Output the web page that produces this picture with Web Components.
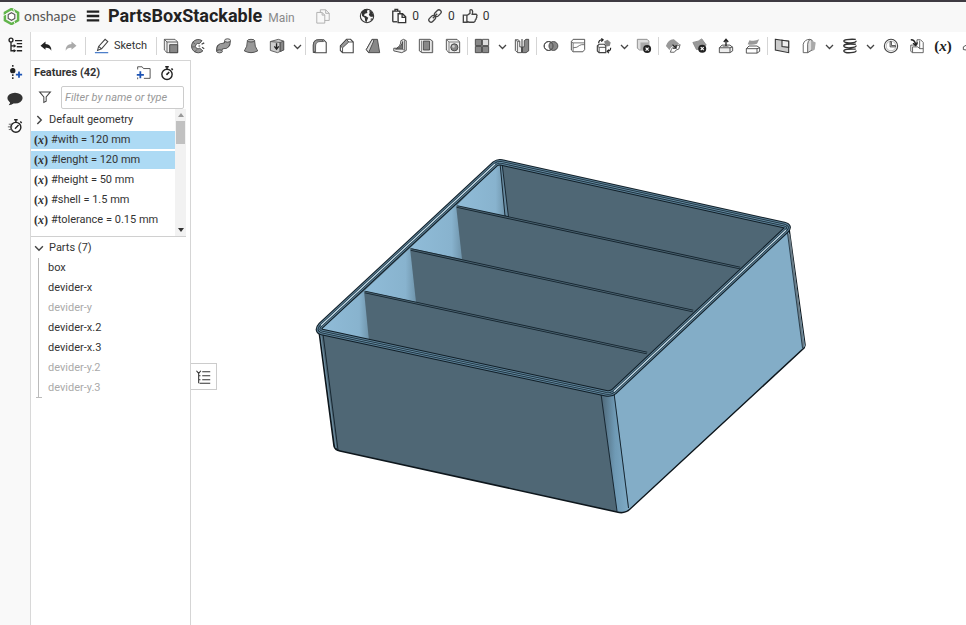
<!DOCTYPE html>
<html lang="en">
<head>
<meta charset="utf-8">
<title>PartsBoxStackable</title>
<style>
html,body{height:100%;margin:0}
body{font:11px/18px Roboto,"Liberation Sans",sans-serif;color:#333;background:#fff;overflow:hidden}
</style>
</head>
<body>
<cad-app></cad-app>
<script>
const ICONS = {
logo:`<path d="M9 1l7 4v8l-7 4-7-4V5z" fill="none" stroke="#62b54c" stroke-width="2.600"/><path d="M9 5l3.500 2v4L9 13l-3.500-2V7z" fill="#fff" stroke="#555" stroke-width="1.200"/><path d="M0 8l5-2M11 1l1.500 4M11 13l2 4" stroke="#f8f8f8" stroke-width="1"/>`,
menu:`<path d="M2 4h14M2 9h14M2 14h14" stroke="#222" stroke-width="2.600"/>`,
copy:`<path d="M6 5V2h6l4 4v8h-5M12 2v4h4M2 5h6l3 3v9H2zM8 5v3h3" fill="none" stroke="#aaa"/>`,
globe:`<circle cx="9" cy="9" r="7.500" fill="#f8f8f8" stroke="#333" stroke-width="1.200"/><path d="M3 4l4-2.500h3L9 4l.5 1.500-3 1-1 2 2 .5 3 2-1 2-1 3-1.500-1-.5-4-3-2-.5-3zM11.500 2.500l3 2 2 4-1.500 1.500-2.500-.5-1.500-2 1-2zM13 12l2-.5-1.500 3z" fill="#333"/>`,
docs:`<path d="M2 15.500V3.500h8v2M4.500 3V1.500h3V3" fill="none" stroke="#333" stroke-width="1.500"/><path d="M2 15.500h5" stroke="#333" stroke-width="1.500"/><path d="M8 6.500h5l3.500 3.500v6.500H8zM12.500 6.500v4h4" fill="#fff" stroke="#333" stroke-width="1.500"/>`,
link:`<g fill="none" stroke="#444" stroke-width="1.500"><rect x="8" y="3.500" width="8.500" height="5" rx="2.500" transform="rotate(-45 12 6)"/><rect x="1.500" y="9.500" width="8.500" height="5" rx="2.500" transform="rotate(-45 6 12)"/><path d="M6.500 11.500l5-5"/></g>`,
thumb:`<path d="M1.500 8h4v8h-4zM5.500 8.500L9 6V2.500Q10 1 11.500 2.500 12.500 4 11.500 7H16q1.500 1 .5 2.500.5 1-.5 2 0 1.500-1 2 0 2-1.500 2.500H8l-2.500-1" fill="none" stroke="#444" stroke-width="1.500"/>`,
tree:`<g fill="none" stroke="#222" stroke-width="1.500"><circle cx="4.500" cy="3.500" r="2.200"/><path d="M4.500 6v9.500H9M4.500 10H9M9 4h8M11 7.500h6M11 11h6M11 15.500h6"/></g><path d="M7.500 8l3 2-3 2zM7.500 13.500l3 2-3 2z" fill="#222"/>`,
insert:`<path d="M6.500 1v16" stroke="#333" stroke-width="1.800" stroke-dasharray="2 1.500"/><circle cx="6.500" cy="7.500" r="3" fill="#222"/><path d="M13.500 8.500v7M10 12h7" stroke="#1d54b5" stroke-width="2"/>`,
chat:`<ellipse cx="9" cy="8" rx="8.600" ry="6" fill="#333"/><path d="M3 11q1 3-1 5 4 0 6-3z" fill="#333"/>`,
watch:`<circle cx="9" cy="10.500" r="5.800" fill="none" stroke="#222" stroke-width="1.600"/><path d="M7 2h4M9 2v3M14 4l1.500 1.500M9 10.500l2.500-2.500" stroke="#222" stroke-width="1.700"/><circle cx="9" cy="10.500" r="1" fill="#222"/>`,
perf:`<circle cx="10" cy="10.500" r="5.600" fill="#fff" stroke="#222" stroke-width="1.600"/><path d="M8 2h4M10 2v3M15 4l1.500 1.500M9 12l4-4" stroke="#222" stroke-width="1.600"/><path d="M2 7h4M1 10h5M2 13h4" stroke="#555" stroke-width="1"/>`,
undo:`<path d="M3 8l6-5v3q7 0 7 8-2-4-7-3.500V13z" fill="#222"/>`,
redo:`<path d="M15 8L9 3v3q-7 0-7 8 2-4 7-3.500V13z" fill="#aaa"/>`,
pencil:`<path d="M4 14l1.200-4.500L12.500 1.500l3 2.500-7 8.200zM5.200 9.500l3.300 2.700" fill="#fff" stroke="#444" stroke-width="1.200"/><path d="M1 16.500h15" stroke="#3c73c5" stroke-width="1.300"/>`,
extrude:`<path d="M1.500 1.500h12l3 3v12h-12l-3-3z" fill="#eee" stroke="#555"/><path d="M1.500 1.500l3 3h12M4.500 4.500v12" fill="none" stroke="#555"/><path d="M7.500 7.500h9v9h-9z" fill="#888" stroke="#444"/>`,
revolve:`<path d="M13.500 3A7.500 7.500 0 1 0 14.500 14.500L11 11.500A3 3 0 1 1 10.500 6.500z" fill="#999" stroke="#444"/><path d="M6 7L3 4.500M5.500 10H1.500M7.500 13l-2 3" stroke="#555" stroke-width=".8"/><path d="M9.500 9h2M13 7l3-1.500M13.500 10.500l2.500 1.500" stroke="#444" stroke-width="1.400"/>`,
sweep:`<path d="M4 14.500q-1-5.500 4-5.500 5 0 5-5.500" fill="none" stroke="#444" stroke-width="7.400"/><path d="M4 15q-1-6 4-6 5 0 5-6" fill="none" stroke="#999" stroke-width="5.400"/><ellipse cx="13" cy="2.800" rx="3.300" ry="1.900" fill="#ddd" stroke="#444"/><ellipse cx="4" cy="15" rx="3.200" ry="1.700" fill="#aaa" stroke="#444"/>`,
loft:`<path d="M5 3h8q0 7 3.500 11.500-7.500 4-15 0Q5 10 5 3z" fill="#999" stroke="#444"/><ellipse cx="9" cy="3" rx="4" ry="1.500" fill="#bbb" stroke="#444"/>`,
thicken:`<path d="M1.500 4l9-2.500 6 2v10l-7 3-8-2.500z" fill="#ccc" stroke="#555"/><path d="M12.500 5l4-1.500v10l-4 1.700z" fill="#888" stroke="#555"/><path d="M1.500 4L12.500 5v10" fill="none" stroke="#555"/><path d="M8.500 6v6M6 9.500L8.500 12.500 11 9.500" fill="none" stroke="#222" stroke-width="1.500"/>`,
fillet:`<path d="M1.500 16V8Q1.500 2 8 2h5l3 3v11.500H4z" fill="#fff" stroke="#444" stroke-width="1.200"/><path d="M1.500 14V8Q1.500 2 8 2h3l2 2H9Q4 4 4 9v7.500z" fill="#999" stroke="#555"/>`,
chamfer:`<path d="M1.500 14V9l7-7.500H13l3 3v12H4z" fill="#fff" stroke="#444" stroke-width="1.200"/><path d="M1.500 9l7-7.500 2.500 3L4 11z" fill="#999" stroke="#444"/><path d="M4 11v5.500M11 4.500h5" stroke="#444"/>`,
draft:`<path d="M1.500 13L8 1.500h6l2.500 15H4z" fill="#888" stroke="#444"/><path d="M1.500 13l6.500-11.500L10 3 4 16.500z" fill="#ddd" stroke="#444"/>`,
rib:`<path d="M10 3l3-1.500 3 1.500v11l-5 2.500-9-2v-3h3Q10 9 10 3z" fill="#eee" stroke="#444"/><path d="M12 4v8.500H4Q11 10 12 4z" fill="#777" stroke="#444"/><path d="M11 12l3 2V2.500" fill="none" stroke="#666"/>`,
shell:`<path d="M1.500 1.500h12l3 2v13h-12l-3-2z" fill="#eee" stroke="#444"/><path d="M6 3.500h7v10H6z" fill="#888" stroke="#444"/><path d="M4 3v13.500M16 3.500v13" stroke="#777"/>`,
hole:`<path d="M1.500 1.500h12l3 3v12h-12l-3-3z" fill="#eee" stroke="#444"/><path d="M1.500 1.500l3 3h12M4.500 4.500v12" fill="none" stroke="#777"/><circle cx="10.500" cy="10.500" r="4" fill="#888" stroke="#444"/><circle cx="9.500" cy="9.500" r="1.500" fill="#ccc"/>`,
pattern:`<g stroke="#444"><path d="M1.500 1.500h7v7h-7zM9.500 9.500h7v7h-7zM1.500 9.500h7v7h-7z" fill="#888"/><path d="M9.500 1.500h7v7h-7z" fill="#ddd"/></g>`,
mirror:`<path d="M1.500 2h3l2 1.500V10h2v6.500H4L1.500 14z" fill="#eee" stroke="#444"/><path d="M9.500 16.500V10h2V3l2-1.500h3v13l-3 2z" fill="#888" stroke="#444"/><path d="M9 1v16" stroke="#444" stroke-width="1.200"/><path d="M4 4v12.500M1.500 2L4 4h2.500" stroke="#666" fill="none"/>`,
boolean:`<circle cx="6.300" cy="9" r="5" fill="#fff" stroke="#444"/><circle cx="11.700" cy="9" r="5" fill="#888" stroke="#444"/><circle cx="6.300" cy="9" r="5" fill="none" stroke="#444"/>`,
split:`<path d="M1.500 4l2-2.500h13V13l-2 2.500h-11l-2-2z" fill="#fff" stroke="#444"/><path d="M1.500 4l2 1.500h13M3.500 5.500v10M3.500 11q5 0 7-2.500 2-1.500 6-1" fill="none" stroke="#666"/>`,
transform:`<path d="M1.500 9l2-2h6l1.500 2v7.500H3.500l-2-2z" fill="#fff" stroke="#444" stroke-width="1.300"/><path d="M1.500 9l2 1.500H11M3.500 10.500v6" fill="none" stroke="#444"/><path d="M9 4l4-2 3.500 3-1 4-4 .5z" fill="#888"/><path d="M3 6q0-4 4-4M6 .5L8 2 6 4M16.500 11q0 4-3.500 4M14.500 13l-2 2 2 2" fill="none" stroke="#222" stroke-width="1.300"/>`,
delete:`<path d="M1.500 1.500h11l2 2v10H4l-2.500-2z" fill="#ddd" stroke="#888"/><path d="M5 5h9v8H5z" fill="#aaa"/><circle cx="12.500" cy="12.500" r="4.500" fill="#222"/><path d="M10.800 10.800l3.400 3.400m0-3.400l-3.400 3.400" stroke="#fff" stroke-width="1.300"/>`,
modify:`<path d="M1 9Q4 1 10 1.500l6 5-4 3q-4-2-7 4z" fill="#999"/><path d="M6 16Q8 9 12 9.500l5-2-1.500 5-3 1-2 2.500z" fill="#fff" stroke="#555"/><path d="M8.500 7.500l4 4M12.500 8v3.500H9" fill="none" stroke="#222" stroke-width="1.300"/>`,
delface:`<path d="M1 5Q8 4 11 1l5 7q-4 5-11 5z" fill="#999" stroke="#888"/><circle cx="11.500" cy="12" r="4.500" fill="#222"/><path d="M9.800 10.300l3.400 3.400m0-3.400l-3.400 3.400" stroke="#fff" stroke-width="1.300"/>`,
moveface:`<path d="M1.500 11l3-3h9l3 2.500v4l-3 2h-12z" fill="#eee" stroke="#444"/><path d="M1.500 11h12l3-1M13.500 11v5" fill="none" stroke="#444"/><path d="M5 10l2-2.500h6L11.500 10z" fill="#999"/><path d="M9 9V2M6.500 4.500L9 1.500l2.500 3" fill="none" stroke="#222" stroke-width="1.500"/>`,
replace:`<path d="M1.500 12l3-3h9l3 2v4l-3 2h-12z" fill="#fff" stroke="#444"/><path d="M1.500 12h12l3-1M13.500 12v5" fill="none" stroke="#444"/><path d="M3 7L5 2.500Q11 4 16 1.500L13.500 6.500Q8 8.500 3 7z" fill="#999"/>`,
plane:`<path d="M1.500 1.500l15 2v13l-15-3z" fill="#ccc" stroke="#333" stroke-width="1.200"/><path d="M9 2.500l7.500 1v7L9 9.500z" fill="#eee" stroke="#333" stroke-width="1.200"/>`,
surface:`<path d="M2.500 7Q4 1.500 10 1.500v11l-2.500 4h-5z" fill="#fff" stroke="#555"/><path d="M10 1.500l2.500 1v11l-5 3V7q0-3 2.500-5.500z" fill="#ddd" stroke="#555"/><path d="M12.500 3l4 2-1 8-3 2z" fill="#aaa"/>`,
helix:`<g fill="none" stroke="#333" stroke-width="1.500"><path d="M15.500 1.500Q2 1 2 3.500 3 6 10 5.500q6-.5 6-2.500M15.500 7Q2 6 2 9q1 2.500 8 2 6-.5 6-2.500M15.500 12.500Q2 12 2 14.500q1 2.500 8 2 6-.5 6-2.500"/></g>`,
clock:`<circle cx="9" cy="9" r="7.500" fill="#fff" stroke="#444" stroke-width="1.200"/><circle cx="9" cy="9" r="5.500" fill="none" stroke="#999" stroke-width=".8"/><path d="M8 4v6h6V8.500H9.500V4z" fill="#eee" stroke="#444"/>`,
derive:`<path d="M2 8v7l2 1.500h12V5L13 2H9v6H4z" fill="#fff" stroke="#555"/><path d="M4 10v6.500M4 10h6l2 2h4M12 3v9" fill="none" stroke="#555"/><path d="M2 2q5 0 5.500 6M4.500 6l3 2.500L9.500 5" fill="none" stroke="#222" stroke-width="1.500"/>`,
more:`<path d="M1.500 10q4-4 9-2v4q-4 3-9 1z" fill="none" stroke="#444"/>`,
folder:`<path d="M3 5V2h5l1.500 2H17v11H10M3 14v2" fill="none" stroke="#444"/><path d="M6 7v8M2 11h8" stroke="#1d54b5" stroke-width="2"/>`,
funnel:`<path d="M2 2.500h14l-5.500 6.500v5.500L7.500 16V9z" fill="none" stroke="#444" stroke-width="1.300"/>`,
down:`<path d="M2 6l7 7 7-7" fill="none" stroke="#444" stroke-width="2.600"/>`,
right:`<path d="M6 2l7 7-7 7" fill="none" stroke="#444" stroke-width="2.600"/>`,
list:`<path d="M7 3h9M7 7.500h9M7 12h9M4 16h12M3 5v11M3 7.500h2M3 12h2M.5 2L3 5l2.500-3" fill="none" stroke="#333" stroke-width="1.200"/>`
};

class Base extends HTMLElement {
  render(html){ if(!this.shadowRoot) this.attachShadow({mode:'open'}).innerHTML = html; }
}

customElements.define('cad-icon', class extends Base {
  connectedCallback(){
    this.render(`<style>:host{display:block;flex:none;width:var(--icon-size,16px);height:var(--icon-size,16px)}svg{display:block;width:100%;height:100%}</style>
    <svg viewBox="0 0 18 18" aria-hidden="true">${ICONS[this.getAttribute('name')]}</svg>`);
  }
});

customElements.define('tool-button', class extends Base {
  connectedCallback(){
    this.render(`<style>:host{display:block;flex:none;width:26px}
    button{all:unset;display:flex;align-items:center;justify-content:center;gap:4px;width:100%;height:26px;cursor:pointer}
    :host([small]){width:14px;--icon-size:9px}:host([wide]){width:67px}</style>
    <button aria-label="${this.getAttribute('label') || this.getAttribute('icon')}"><cad-icon name="${this.getAttribute('icon')}"></cad-icon><slot></slot></button>`);
  }
});

customElements.define('tool-group', class extends Base {
  connectedCallback(){
    const items = this.getAttribute('items').split(' ').map(n =>
      n === 'down' ? '<tool-button small icon="down" label="More tools"></tool-button>' :
      n === 'variable' ? '<button class="var" aria-label="Variable">(<i>x</i>)</button>' :
      `<tool-button icon="${n}"></tool-button>`).join('');
    this.render(`<style>:host{display:flex;flex:none;align-items:center}
    :host::before{content:"";width:1px;height:18px;margin:0 1px;background:#d5d5d5}
    tool-button:nth-of-type(even):not([small]){width:27px}
    .var{all:unset;width:26px;text-align:center;font:bold 15px/26px "Liberation Serif",serif;color:#222}</style>${items}`);
  }
});

customElements.define('app-header', class extends Base {
  connectedCallback(){
    this.render(`<style>:host{display:flex;align-items:center;height:32px;box-sizing:border-box;border-top:2px solid #3f3b42;background:#f8f8f8;padding:0 0 2px 3px;overflow:hidden}
    .brand{display:flex;align-items:center;gap:4px;color:#555;text-decoration:none;font:400 14px/20px Lato,Roboto,sans-serif;width:82px}
    button{all:unset;display:flex;align-items:center;gap:5px;cursor:pointer;font-size:12px}
    h1{font-size:18px;line-height:22px;margin:0 0 0 7px;color:#222}
    .branch{font-size:12px;color:#888;margin:3px 0 0 6px;width:47px}
    .globe{margin-left:28px}.stats{display:flex;gap:7px;margin-left:16px}.brand cad-icon{--icon-size:17px}.stats button:first-child{margin-right:1px}</style>
    <a class="brand" href="#"><cad-icon name="logo"></cad-icon><span>onshape</span></a>
    <button aria-label="Menu"><cad-icon name="menu"></cad-icon></button>
    <h1>PartsBoxStackable</h1><span class="branch">Main</span>
    <button aria-label="Copy"><cad-icon name="copy"></cad-icon></button>
    <button class="globe" aria-label="Public"><cad-icon name="globe"></cad-icon></button>
    <div class="stats"><button aria-label="Copies"><cad-icon name="docs"></cad-icon>0</button>
    <button aria-label="Links"><cad-icon name="link"></cad-icon>0</button>
    <button aria-label="Likes"><cad-icon name="thumb"></cad-icon>0</button></div>`);
  }
});

customElements.define('tool-bar', class extends Base {
  connectedCallback(){
    this.render(`<style>:host{display:flex;align-items:center;height:28px;background:#fff;overflow:hidden;box-sizing:border-box}
    .hist{display:flex;width:54px}.hist tool-button{--icon-size:15px}</style>
    <div class="hist"><tool-button icon="undo"></tool-button><tool-button icon="redo"></tool-button></div>
    <sketch-group></sketch-group>
    <tool-group items="extrude revolve sweep loft thicken down"></tool-group>
    <tool-group items="fillet chamfer draft rib shell hole"></tool-group>
    <tool-group items="pattern down mirror"></tool-group>
    <tool-group items="boolean split transform down delete"></tool-group>
    <tool-group items="modify delface moveface replace"></tool-group>
    <tool-group items="plane surface down helix down clock derive variable more"></tool-group>`);
  }
});

customElements.define('sketch-group', class extends Base {
  connectedCallback(){
    this.render(`<style>:host{display:flex;flex:none;align-items:center;padding-right:1px}:host::before{content:"";width:1px;height:18px;margin:0 1px;background:#d5d5d5}</style>
    <tool-button wide icon="pencil" label="Sketch">Sketch</tool-button>`);
  }
});

customElements.define('side-rail', class extends Base {
  connectedCallback(){
    this.render(`<style>:host{display:flex;flex-direction:column;align-items:center;background:#f9f9f9;border-right:1px solid #d8d8d8;box-sizing:border-box}
    tool-button{margin-bottom:1px}tool-button:first-child{width:100%;background:#fff;margin-bottom:2px}</style>
    <tool-button icon="tree" label="Feature list"></tool-button><tool-button icon="insert" label="Insert"></tool-button>
    <tool-button icon="chat" label="Comments"></tool-button><tool-button icon="perf" label="Performance"></tool-button>`);
  }
});

customElements.define('variable-row', class extends Base {
  connectedCallback(){
    this.render(`<style>:host{display:flex;align-items:center;gap:3px;height:18px;padding-left:3px;white-space:nowrap}
    :host([selected]){background:#addaf4}
    b{font:bold 12px/16px "Liberation Serif",serif;width:14px}</style><b>(<i>x</i>)</b><span><slot></slot></span>`);
  }
});

customElements.define('feature-panel', class extends Base {
  connectedCallback(){
    this.render(`<style>:host{display:flex;flex-direction:column;border:1px solid #d5d5d5;border-left:0;border-bottom:0;background:#fff;box-sizing:border-box;min-width:0}
    header{display:flex;align-items:center;height:24px;padding:0 15px 0 3px;gap:8px}
    h2{font-size:11px;margin:0;flex:1}
    .ib{all:unset}
    label{display:flex;align-items:center;height:24px;padding:0 6px 0 7px;gap:9px;--icon-size:14px}
    input{flex:1;min-width:0;height:23px;box-sizing:border-box;border:1px solid #ccc;border-radius:2px;padding:0 3px;font:italic 11px Roboto,sans-serif;color:#333}
    input::placeholder{color:#999}
    .scroll{display:flex;height:127px;margin-right:4px;border-bottom:1px solid #d0d0d0;overflow:hidden}
    .list{flex:1;min-width:0;display:flex;flex-direction:column;gap:2px;padding-top:2px}
    .fold{all:unset;display:flex;align-items:center;gap:5px;height:18px;padding-left:3px;--icon-size:10px}
    .bar{width:11px;background:#f2f2f2;display:flex;flex-direction:column;align-items:center}
    .up,.dn{border:3px solid transparent}.up{border-top:0;border-bottom:4px solid #999;margin:4px 0}
    .dn{border-bottom:0;border-top:4px solid #333;margin:auto 0 4px}.thumb{width:9px;height:23px;background:#c1c1c1}
    .parts{padding-top:2px}
    ul{list-style:none;margin:1px 0 0 7px;padding:0 0 0 9px;border-left:1px solid #bbb;position:relative}
    ul::after{content:"";position:absolute;left:-3px;bottom:0;width:6px;height:1px;background:#bbb}
    li{line-height:20px}.off{color:#aaa}</style>
    <header><h2>Features (42)</h2><button class="ib" aria-label="Add folder"><cad-icon name="folder"></cad-icon></button><button class="ib" aria-label="Timing"><cad-icon name="watch"></cad-icon></button></header>
    <label aria-label="Filter"><cad-icon name="funnel"></cad-icon><input type="text" placeholder="Filter by name or type"></label>
    <div class="scroll"><div class="list"><button class="fold"><cad-icon name="right"></cad-icon>Default geometry</button>
    <variable-row selected>#with = 120 mm</variable-row><variable-row selected>#lenght = 120 mm</variable-row><variable-row>#height = 50 mm</variable-row><variable-row>#shell = 1.5 mm</variable-row><variable-row>#tolerance = 0.15 mm</variable-row></div>
    <div class="bar"><span class="up"></span><span class="thumb"></span><span class="dn"></span></div></div>
    <div class="parts"><button class="fold"><cad-icon name="down"></cad-icon>Parts (7)</button>
    <ul><li>box</li><li>devider-x</li><li class="off">devider-y</li><li>devider-x.2</li><li>devider-x.3</li><li class="off">devider-y.2</li><li class="off">devider-y.3</li></ul></div>`);
  }
});

customElements.define('model-view', class extends Base {
  connectedCallback(){
    const rim = 'M321 325.500L495 164Q498 161.500 502 162.500L784 225Q790 226.500 786 230L614 391.500Q611 394.300 606 393.300L322 332Q316.500 330.500 321 325.500Z';
    const divider = (x,y,X,Y) => `<path d="M${x} ${y}L${X} ${Y}" stroke="#15242e" stroke-width="2.800"/><path d="M${x} ${y}L${X} ${Y}" stroke="#48616f" stroke-width="1"/>`;
    this.render(`<style>:host{display:block;position:relative;min-width:0;background:#fff}svg{display:block;width:100%;height:100%}
    button{position:absolute;left:0;top:303px;width:26px;height:27px;padding:0;border:1px solid #ccc;border-left:0;background:#fff;display:grid;place-items:center}</style>
    <svg viewBox="191 60 775 565" role="img" aria-label="Box with dividers" fill="none" stroke-linejoin="round">
    <defs><linearGradient id="c" x1="0" x2="1"><stop offset="0" stop-color="#4d6676"/><stop offset=".5" stop-color="#6f9ab5"/><stop offset="1" stop-color="#7fabc6"/></linearGradient>
    <linearGradient id="l" x1="0" x2="1"><stop offset="0" stop-color="#90bcd8"/><stop offset=".8" stop-color="#88b3ce"/><stop offset="1" stop-color="#6f94ab"/></linearGradient></defs>
    <path d="M319 331L334 446Q335 450 340 451L617 512Q625 514 630 509L804 348 805 345 789 229 610 393z" fill="#4f6775" stroke="#0d161c" stroke-width="1.600"/>
    <path d="M614 393L789 232 805 346 629 509z" fill="#83adc7"/>
    <path d="M601 394L614 393 629 509Q625 513 617 511z" fill="url(#c)"/>
    <path d="M601 394L617 511M614 393L628.500 508M323 334L338 450" stroke="#172732"/>
    <path d="M320.500 333L336 448" stroke="#6d8ea2"/>
    <path d="M789 234L803.500 347" stroke="#6d7f8a" stroke-width="2"/><path d="M787.500 233L802.500 348" stroke="#172732" stroke-width=".8"/>
    <path d="M320 329L500 162 787 226 609 393z" fill="#4f6775"/>
    <g fill="url(#l)"><path d="M500 162L505.500 216 456 206z"/><path d="M456 205L462 259 410 248z"/><path d="M410 248L416 302 364 291z"/><path d="M364 291L369 341 320 329z"/></g>
    <path d="M500 163L505 216 508.500 217 502 163z" fill="#678aa0" stroke="#172732"/>
    ${divider(457,206.5,740,268)}${divider(411,249.5,693,311)}${divider(365,292,647,353)}
    <path d="${rim}" stroke="#101e27" stroke-width="6.600"/>
    <path d="${rim}" stroke="#5b7f95" stroke-width="4.600"/>
    <path d="${rim}" stroke="#1b303d" stroke-width="2.600"/>
    <path d="${rim}" stroke="#658aa0" stroke-width="1"/>
    <path d="M321 325.500L495 164M786 230L614 391.500" stroke="#c5dce8" stroke-width="1.200"/></svg>
    <button aria-label="Toggle list"><cad-icon name="list"></cad-icon></button>`);
  }
});

customElements.define('cad-app', class extends Base {
  connectedCallback(){
    this.render(`<style>:host{display:grid;height:100%;grid-template:32px 28px minmax(0,1fr) / 31px 160px minmax(0,1fr)}
    app-header{grid-column:1/-1}side-rail{grid-row:2/4}tool-bar{grid-column:2/4;padding-left:1px}model-view{grid-column:3}feature-panel{grid-column:2}</style>
    <app-header></app-header><side-rail></side-rail><tool-bar></tool-bar><feature-panel></feature-panel><model-view></model-view>`);
  }
});
</script>
</body>
</html>
